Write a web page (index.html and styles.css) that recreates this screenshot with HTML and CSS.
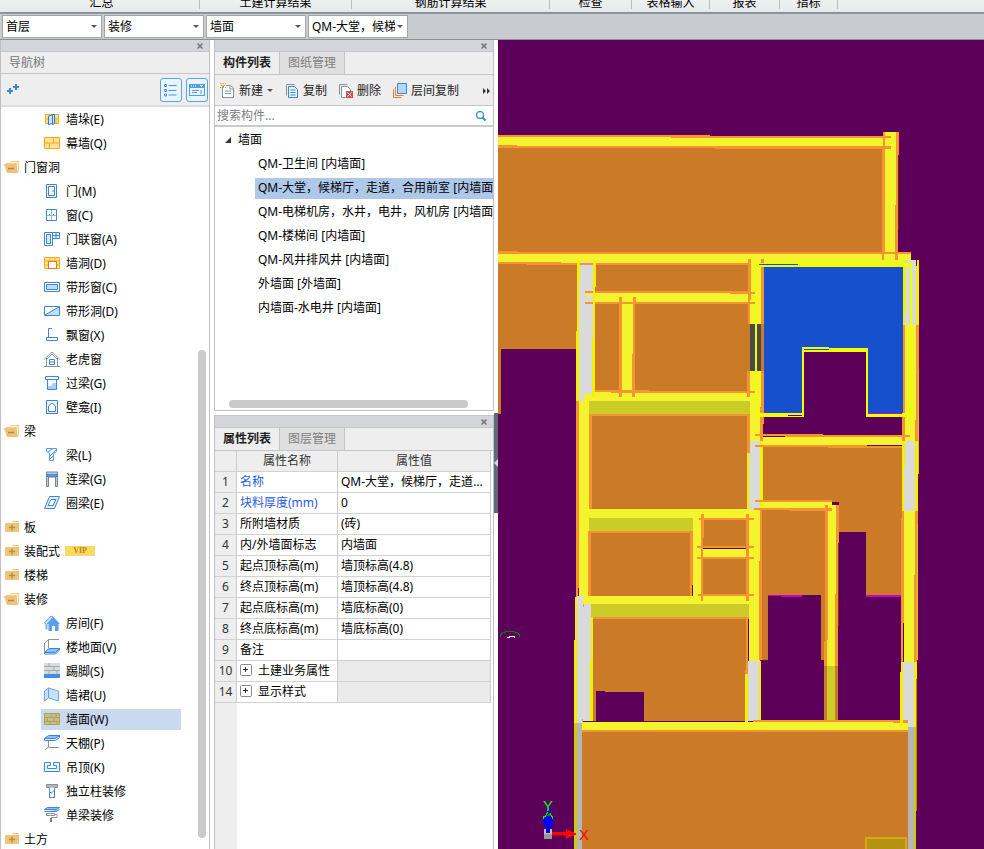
FILE: index.html
```html
<!DOCTYPE html>
<html lang="zh-CN">
<head>
<meta charset="utf-8">
<title>构件列表</title>
<link rel="stylesheet" href="styles.css">
</head>
<body>
<header class="ribbon">
  <span>汇总</span><span>土建计算结果</span><span>钢筋计算结果</span><span>检查</span><span>表格输入</span><span>报表</span><span>指标</span>
</header>
<div class="selectors">
  <select aria-label="楼层"><option>首层</option></select>
  <select aria-label="类别"><option>装修</option></select>
  <select aria-label="构件类型"><option>墙面</option></select>
  <select aria-label="构件"><option>QM-大堂，候梯厅，走道，合用前室</option></select>
</div>
<main class="workspace">
  <nav class="panel nav" aria-label="导航树">
    <div class="caption"><button class="close" aria-label="关闭导航树"><svg viewBox="0 0 6 6"><path d="M.5 .5l5 5M5.500 .5l-5 5"/></svg></button></div>
    <h2 class="nav-title">导航树</h2>
    <div class="nav-tools">
      <button class="plus" aria-label="展开"><svg viewBox="0 0 12 11"><path d="M0 7h6M3 4v6M6 3h6M9 0v6" fill="none" stroke="#3f86d6" stroke-width="2"/></svg></button>
      <button class="view" aria-label="列表视图"><svg viewBox="0 0 14 14"><path d="M4.500 2.500h8M4.500 7.500h8M4.500 12h8" fill="none" stroke="#4794e4"/><path d="M.5 1.500h2v2h-2zM.5 6.500h2v2h-2zM.5 11h2v2h-2z" fill="none" stroke="#4794e4"/></svg></button>
      <button class="view" aria-label="窗口视图"><svg viewBox="0 0 16 14"><path d="M0 1h16v12H0z" fill="#4f9df0"/><path d="M1 5h14v7H1z" fill="#eaf4ff"/><path d="M2 3h1M4 3h1M6 3h1M11 2.500h3M12 3.500h1" stroke="#fff"/><path d="M3 7.500h7M3 9.500h5M12 7v4" stroke="#4f9df0"/></svg></button>
    </div>
    <div class="tree-area">
      <ul class="tree">
        <li class="leaf"><svg viewBox="0 0 16 16"><path d="M1.500 3.500h13v9h-13zM1.500 8h13M5 3.500v4M12 8v4" fill="#ffe28f" stroke="#f5ae1c"/><path d="M4.500 5.500l4-2v9l-4 1zM8.500 3.500h2v9l-2 1z" fill="#cfe4fa" stroke="#2f7dd1"/></svg><a href="#">墙垛(E)</a></li>
        <li class="leaf"><svg viewBox="0 0 16 16"><path d="M.5 2.500h15v11h-15zM.5 8h15M9.500 2.500V8M5.500 8v5.500" fill="#ffe299" stroke="#f8a906"/></svg><a href="#">幕墙(Q)</a></li>
        <li class="group"><svg viewBox="0 0 16 16"><use href="#folder-open"/></svg><a href="#">门窗洞</a></li>
        <li class="leaf"><svg viewBox="0 0 16 16"><path d="M2.500 1.500h10v13h-10z" fill="#e8f3ff" stroke="#3f86d6"/><path d="M4.500 3.500h6v9h-6z" fill="#fff" stroke="#3f86d6"/><path d="M9 7v2" stroke="#3f86d6"/></svg><a href="#">门(M)</a></li>
        <li class="leaf"><svg viewBox="0 0 16 16"><path d="M2.500 2.500h10v11h-10z" fill="#fff" stroke="#3f86d6"/><path d="M7.500 3v10M3 8.500h9" stroke="#8fbbea"/><path d="M5 7.500h1M9 7.500h1" stroke="#3f86d6"/></svg><a href="#">窗(C)</a></li>
        <li class="leaf"><svg viewBox="0 0 16 16"><path d="M.5 1.500h8v13h-8z" fill="#fff" stroke="#3f86d6"/><path d="M2.500 3.500h4v9h-4z" fill="#d3e6fa" stroke="#3f86d6"/><path d="M8.500 1.500h7v6h-7zM12 1.500v6M8.500 4.500h7" fill="#e8f3ff" stroke="#3f86d6"/></svg><a href="#">门联窗(A)</a></li>
        <li class="leaf"><svg viewBox="0 0 16 16"><path d="M.5 2.500h15v11h-15zM.5 6h15M.5 10h15M6 2.500V6M11 2.500V6" fill="#ffe299" stroke="#f8ae16"/><path d="M4.500 6.500h8v7h-8z" fill="#fff" stroke="#ef7421"/></svg><a href="#">墙洞(D)</a></li>
        <li class="leaf"><svg viewBox="0 0 16 16"><path d="M.5 3.500h15v9h-15z" fill="#fff" stroke="#3f86d6"/><path d="M2.500 5.500h11v5h-11z" fill="#bfdcf8" stroke="#3f86d6"/></svg><a href="#">带形窗(C)</a></li>
        <li class="leaf"><svg viewBox="0 0 16 16"><path d="M15.500 3L.5 12.500h15z" fill="#c5dcf5"/><path d="M.5 3.500h15v9h-15zM1 12L15 4" fill="none" stroke="#3f86d6"/></svg><a href="#">带形洞(D)</a></li>
        <li class="leaf"><svg viewBox="0 0 16 16"><path d="M8 1.500H4.500v9M2.500 10.500h11v3h-11z" fill="none" stroke="#3f86d6"/></svg><a href="#">飘窗(X)</a></li>
        <li class="leaf"><svg viewBox="0 0 16 16"><path d="M0 8.500l8-7.500 8 7.500M2.500 7v8M13.500 7v8M0 15.500h16M3 8l5-5 5 5" fill="none" stroke="#8495a0"/><path d="M5.500 8.500h5v5h-5zM5.500 11h5" fill="#fff" stroke="#3f86d6"/></svg><a href="#">老虎窗</a></li>
        <li class="leaf"><svg viewBox="0 0 16 16"><path d="M1.500 1.500h13v3h-13zM3.500 4.500h9v10h-9z" fill="#f2f8ff" stroke="#3f86d6"/><path d="M4 11h3l2-3h3v6H4z" fill="#a9cdf3"/></svg><a href="#">过梁(G)</a></li>
        <li class="leaf"><svg viewBox="0 0 16 16"><path d="M2.500 1.500h11v13h-11z" fill="#e8f3ff" stroke="#3f86d6"/><path d="M4.500 12.500V7l3.500-3 3.500 3v5.500z" fill="#fff" stroke="#3f86d6"/></svg><a href="#">壁龛(I)</a></li>
        <li class="group"><svg viewBox="0 0 16 16"><use href="#folder-open"/></svg><a href="#">梁</a></li>
        <li class="leaf"><svg viewBox="0 0 16 16"><path d="M2.500 1.500h10v3l-3 2v7h-4v-7l-3-2zM4 5l4-3M6 9l6-6M6 12l3-3" fill="#eef6ff" stroke="#589be2"/></svg><a href="#">梁(L)</a></li>
        <li class="leaf"><svg viewBox="0 0 16 16"><path d="M2.500 1v14.500h2V6h7v9.500h2V1z" fill="#c5ced4" stroke="#75858f"/><path d="M3 3.500h10v2H3z" fill="#5ea3ee" stroke="#3f86d6"/></svg><a href="#">连梁(G)</a></li>
        <li class="leaf"><svg viewBox="0 0 16 16"><path d="M5.500 1.500h10l-5 12H.5zM7 4.500h5l-3 6H4z" fill="#e0efff" fill-rule="evenodd" stroke="#3f86d6"/></svg><a href="#">圈梁(E)</a></li>
        <li class="group"><svg viewBox="0 0 16 16"><use href="#folder-closed"/></svg><a href="#">板</a></li>
        <li class="group"><svg viewBox="0 0 16 16"><use href="#folder-closed"/></svg><a href="#">装配式</a><b class="vip">VIP</b></li>
        <li class="group"><svg viewBox="0 0 16 16"><use href="#folder-closed"/></svg><a href="#">楼梯</a></li>
        <li class="group"><svg viewBox="0 0 16 16"><use href="#folder-open"/></svg><a href="#">装修</a></li>
        <li class="leaf"><svg viewBox="0 0 16 16"><path d="M.5 8L7 1l2 1-6 7v5H2V9z" fill="#cfe6fb" stroke="#6aa6e6"/><path d="M3 9l6.500-7L16 9h-1.500v7H11v-5H8v5H4.500V9z" fill="#5a9eee"/></svg><a href="#">房间(F)</a></li>
        <li class="leaf"><svg viewBox="0 0 16 16"><path d="M15 .5H4.500V9M4.500 .5L.5 4v9" fill="none" stroke="#8495a0"/><path d="M5 9.500h10.500l-4 4H.5z" fill="#8cc0f8" stroke="#3f86d6"/><path d="M.5 13.500v1.500h11l4-4V9.500l-4 4z" fill="#e0efff" stroke="#3f86d6"/></svg><a href="#">楼地面(V)</a></li>
        <li class="leaf"><svg viewBox="0 0 16 16"><path d="M0 0h16v11H0z" fill="#d8dbdd"/><path d="M0 3.500h16M0 7.500h16M5 0v3M10 4v3M5 8v3M13 8v3" stroke="#a4aaaf"/><path d="M0 11h16v4H0z" fill="#3f8ee6"/></svg><a href="#">踢脚(S)</a></li>
        <li class="leaf"><svg viewBox="0 0 16 16"><path d="M.5 4l4-3v10l-4 3zM4.500 1l10 3v10l-10-3z" fill="#c8e0fa" stroke="#6aa6e6"/></svg><a href="#">墙裙(U)</a></li>
        <li class="leaf selected"><svg viewBox="0 0 16 16"><path d="M.5 2.500h15v11h-15z" fill="#bfc099" stroke="#b7a243"/><path d="M0 6.500h16M0 10.500h16M7 2v4M12 2v4M3.500 7v4M10 7v4M6 11v3M13 11v3" stroke="#b7a243"/></svg><a href="#" aria-current="true">墙面(W)</a></li>
        <li class="leaf"><svg viewBox="0 0 16 16"><path d="M4.500 6v6L1 15M4.500 12.500H15" fill="none" stroke="#8495a0"/><path d="M4.500 .5h11l-4 3H.5z" fill="#8cc0f8" stroke="#3f86d6"/><path d="M.5 3.500V5.500h11l4-3v-2l-4 3z" fill="#e0efff" stroke="#3f86d6"/></svg><a href="#">天棚(P)</a></li>
        <li class="leaf"><svg viewBox="0 0 16 16"><path d="M.5 3.500h6v3h-3v3h9v-3h-3v-3h6v9H.5z" fill="#eaf4ff" stroke="#3f86d6"/></svg><a href="#">吊顶(K)</a></li>
        <li class="leaf"><svg viewBox="0 0 16 16"><path d="M2.500 1.500h11v3h-11z" fill="#aeb6bb" stroke="#8495a0"/><path d="M5.500 4.500v10h5v-10" fill="#eef6ff" stroke="#8495a0"/><path d="M5.500 14.500V9l2 1 3-3v7.500z" fill="#fff" stroke="#3f86d6"/></svg><a href="#">独立柱装修</a></li>
        <li class="leaf"><svg viewBox="0 0 16 16"><path d="M3.500 .5h12l-3 2H.5zM.5 4.500h12l3-2" fill="#8cc0f8" stroke="#3f86d6"/><path d="M2.500 6.500h8v2h-8zM11 7.500h2v3H7" fill="none" stroke="#8495a0"/><path d="M7 11v4" stroke="#75858f" stroke-width="2"/></svg><a href="#">单梁装修</a></li>
        <li class="group"><svg viewBox="0 0 16 16"><use href="#folder-closed"/></svg><a href="#">土方</a></li>
      </ul>
      <div class="scroll-y"></div>
    </div>
  </nav>

  <div class="middle">
    <section class="panel components">
      <div class="caption"><button class="close" aria-label="关闭构件列表"><svg viewBox="0 0 6 6"><path d="M.5 .5l5 5M5.500 .5l-5 5"/></svg></button></div>
      <div class="tabs"><button class="active">构件列表</button><button>图纸管理</button></div>
      <div class="actions">
        <button><svg viewBox="0 0 16 16"><path d="M4 3.500H2.500v11h11V5l-3-2.500H6M10 3v3h3M5 8h6M5 10.500h6" fill="#fbfcfc" stroke="#8495a0"/><path d="M0 .5h6M0 4.500h6M1 2.500h5" stroke="#f3a21e" stroke-dasharray="1.500 1"/></svg>新建<i class="arrow"></i></button>
        <button><svg viewBox="0 0 16 16"><path d="M2.500 12.500v-11h8" fill="none" stroke="#8495a0"/><path d="M4.500 3.500h6l3 3v8h-9zM6.500 7h5M6.500 9.500h5M6.500 12h5" fill="#e8f3ff" stroke="#3f86d6"/></svg>复制</button>
        <button><svg viewBox="0 0 16 16"><path d="M1.500 11.500v-10h8" fill="none" stroke="#8495a0"/><path d="M3.500 3.500h6l3 3v8h-9z" fill="#fff" stroke="#8495a0"/><path d="M8 8h7v7H8z" fill="#d64c4c"/><path d="M9.500 9.500l4 4M13.500 9.500l-4 4" stroke="#fff"/></svg>删除</button>
        <button><svg viewBox="0 0 16 16"><path d="M1.500 6v8.500h8M3.500 4v8.500h8" fill="none" stroke="#ef7a24"/><path d="M5.500 .5h9v10h-9z" fill="#b5d6fb" stroke="#3f86d6"/></svg>层间复制</button>
        <button class="more" aria-label="更多"><svg viewBox="0 0 8 6"><path d="M0 0l3 3-3 3zM4 0l3 3-3 3z" fill="#333"/></svg></button>
      </div>
      <div class="search"><input type="text" placeholder="搜索构件..." aria-label="搜索构件"><button aria-label="搜索"><svg viewBox="0 0 12 12"><circle cx="5" cy="5" r="3.500" fill="#fff" stroke="#4598c4" stroke-width="1.500"/><path d="M7.500 7.500l3 3" stroke="#2b8fce" stroke-width="2"/></svg></button></div>
      <div class="list-area">
        <h3><svg viewBox="0 0 6 6"><path d="M6 0v6H0z" fill="#333"/></svg>墙面</h3>
        <ul class="list">
          <li><span>QM-卫生间 [内墙面]</span></li>
          <li class="selected"><span>QM-大堂，候梯厅，走道，合用前室 [内墙面]</span></li>
          <li><span>QM-电梯机房，水井，电井，风机房 [内墙面]</span></li>
          <li><span>QM-楼梯间 [内墙面]</span></li>
          <li><span>QM-风井排风井 [内墙面]</span></li>
          <li><span>外墙面 [外墙面]</span></li>
          <li><span>内墙面-水电井 [内墙面]</span></li>
        </ul>
        <div class="scroll-x"></div>
      </div>
    </section>
    <section class="panel properties">
      <div class="caption"><button class="close" aria-label="关闭属性列表"><svg viewBox="0 0 6 6"><path d="M.5 .5l5 5M5.500 .5l-5 5"/></svg></button></div>
      <div class="tabs"><button class="active">属性列表</button><button>图层管理</button></div>
      <table>
        <colgroup><col class="c-num"><col class="c-name"><col></colgroup>
        <thead><tr><th></th><th>属性名称</th><th>属性值</th></tr></thead>
        <tbody>
          <tr class="key"><th>1</th><td>名称</td><td>QM-大堂，候梯厅，走道，合用前室</td></tr>
          <tr class="key"><th>2</th><td>块料厚度(mm)</td><td>0</td></tr>
          <tr><th>3</th><td>所附墙材质</td><td>(砖)</td></tr>
          <tr><th>4</th><td>内/外墙面标志</td><td>内墙面</td></tr>
          <tr><th>5</th><td>起点顶标高(m)</td><td>墙顶标高(4.8)</td></tr>
          <tr><th>6</th><td>终点顶标高(m)</td><td>墙顶标高(4.8)</td></tr>
          <tr><th>7</th><td>起点底标高(m)</td><td>墙底标高(0)</td></tr>
          <tr><th>8</th><td>终点底标高(m)</td><td>墙底标高(0)</td></tr>
          <tr><th>9</th><td>备注</td><td></td></tr>
          <tr class="fold"><th>10</th><td><button aria-label="展开土建业务属性"><svg viewBox="0 0 12 12"><use href="#expand"/></svg></button>土建业务属性</td><td></td></tr>
          <tr class="fold"><th>14</th><td><button aria-label="展开显示样式"><svg viewBox="0 0 12 12"><use href="#expand"/></svg></button>显示样式</td><td></td></tr>
        </tbody>
      </table>
      <div class="rest"></div>
    </section>
  </div>

  <div class="splitter"><button aria-label="折叠面板"><svg viewBox="0 0 4 8"><path d="M4 0v8L0 4z" fill="#d5d8dc"/></svg></button></div>

  <div class="canvas">
    <svg viewBox="498 40 486 809" preserveAspectRatio="xMinYMin slice" shape-rendering="crispEdges" role="img" aria-label="平面图">
      <path fill="#5c005a" d="M498 40h486v809H498z"/>
      <!-- floors -->
      <path fill="#cb7a27" d="M498 147h386v107H498zM498 264h79v85h-79zM498 349h3v65h-3zM595 265h155v27H595zM595 303h155v89H595zM590 415h159v95H590zM590 532h102v65H590zM703 520h45v28h-45zM703 558h45v37h-45zM592 618h156v103H592zM582 731h326v118H582zM762 446h141v150h-37v-64h-27v-30h-77zM762 509h64v151h-5v-65h-53v65h-6z"/>
      <path fill="#5c005a" d="M501 349h53v1h-53zM596 691h9v1h39v29h-48z"/>
      <!-- top wing -->
      <path fill="#f4f42e" d="M498 137h386v10H498zM498 254h413v9H498zM885 132h11v123h-11z"/>
      <path fill="#f59430" d="M498 135h212v1h181v2H671v-1H498zM498 145h19v1h374v3H715v-1H498zM498 251h20v1h393v2H716v1-1H498zM498 262h63v1h194v2H527v-1h-29zM883 132h2v122h-1v6h-2V148h1zM896 132h3v23h-1v105h-3v-55h1z"/>
      <path fill="#5c2c10" d="M898 155h1v75h-1z"/>
      <!-- left rooms -->
      <path fill="#f4f42e" d="M585 293h165v9H585zM622 300h11v92h-11zM584 392h166v9H584zM579 401h10v196h-10zM579 509h171v9H579zM693 518h10v79h-10zM703 549h47v8h-47zM583 596h167v9H583z"/>
      <path fill="#cccc28" d="M589 401h161v13H589zM589 518h104v13H589zM591 604h158v13H591z"/>
      <path fill="#f59430" d="M585 291h170v3H730v-1H585zM585 302h170v2H585zM619 297h3v100h-3zM633 297h3v7h-1v93h-3v-43h1zM584 390h65v1h106v2H611v-1h-27zM576 401h3v187h-1v9h-2zM589 414h161v2H592v93h-3zM588 531h105v54h-1v11h-2V533h-99v63h-3zM701 514h3v24h-1v63h-2zM699 518h56v2h-56zM697 546h58v2h-58zM697 557h58v2h-58zM698 594h57v2h-57zM746 514h3v87h-3zM592 617h157v2H592z"/>
      <path fill="#dadada" d="M579 262h15v135h-10v4h-5zM577 596h6v8h8v117h-8v2h-6z"/>
      <path fill="#f2f200" d="M577 260h3v20h-1v121h-3v-70h1zM593 260h3v27h-1v110h-3v-60h1zM575 597h2v126h-3v-83h1zM591 617h2v104h-3v-60h1z"/>
      <path fill="#f59430" d="M585 291h8v2h-8zM585 302h8v2h-8zM580 263h13v2h-13zM583 604h1v3h-1zM582 719h1v3h-1z"/>
      <path fill="#f4f42e" d="M585 294h8v2h-8zM584 394h8v4h-8z"/>
      <!-- centre wall -->
      <path fill="#f4f42e" d="M750 260h11v181h-11zM749 510h11v151h-11z"/>
      <path fill="#f59430" d="M748 259h3v41h-1v24h-2zM761 259h3v165h-1v23h-3v-40h1zM747 371h3v26h-3zM747 414h3v39h-3zM760 510h2v150h-3v-99h1zM746 617h2v57h-3v-4h1zM740 518h14v2h-14zM740 546h14v2h-14zM740 557h14v2h-14zM740 594h14v2h-14zM746 514h3v87h-3zM740 391h15v2h-15zM740 292h15v2h-15zM740 302h15v2h-15z"/>
      <path fill="#4a4a4a" d="M750 324h11v47h-11z"/>
      <path fill="#cb7a27" d="M761 324h3v47h-3z"/>
      <path fill="#dadada" d="M750 441h10v69h-11v-57h1zM748 661h11v60h-11z"/>
      <path fill="#f2f200" d="M747 453h2v57h-2zM760 441h3v69h-3zM745 674h3v48h-3zM759 661h2v64h-3v-4h1z"/>
      <!-- right-hand rooms -->
      <path fill="#5c005a" d="M764 417h138v18H764z"/>
      <path fill="#f4f42e" d="M763 437h142v8H763zM763 502h69v6h-69zM828 505h8v161h-9v-76h1zM905 325h11v116h-11zM904 511h11v151h-11zM582 722h326v8H582z"/>
      <path fill="#f59430" d="M755 434h68v1h87v2H785v-1h-30zM755 445h112v1h43v2H828v-1h-73zM755 500h77v2h-77zM754 508h78v3h-42v-1h-36zM825 505h3v135h-1v26h-3v-25h1zM836 505h3v38h-1v123h-3v-72h1zM903 325h2v116h-3v-78h1zM916 325h3v45h-1v71h-3v-21h1zM902 511h2v112h-1v39h-2v-144h1zM915 511h3v13h-1v138h-3v-87h1zM753 720h155v3h-15v-1H753zM582 730h326v2H582z"/>
      <path fill="#cccc28" d="M827 666h8v54h-8zM918 370h1v104h-1zM917 524h1v136h-1z"/>
      <path fill="#cb7a27" d="M824 666h3v54h-3zM835 666h3v54h-3z"/>
      <path fill="#6b3a16" d="M838 543h1v83h-1z"/>
      <path fill="#dadada" d="M905 260h11v65h-11zM905 441h10v70h-11v-44h1zM903 662h11v65h-6v-7h-5z"/>
      <path fill="#f2f200" d="M903 260h3v53h-1v12h-2zM916 266h1v-6h2v65h-3zM902 441h3v26h-1v44h-2zM915 441h3v70h-3zM901 662h2v65h-3v-55h1zM914 662h3v17h-1v48h-2z"/>
      <path fill="#b6b6b6" d="M577 723h5v126h-5zM908 727h6v122h-6z"/>
      <path fill="#cccc00" d="M574 723h3v126h-3zM914 727h2v122h-2z"/>
      <path fill="#cb7a27" d="M916 679h1v132h-1z"/>
      <path fill="#c800c8" d="M768 595h34v2h-21v-1h-13zM866 595h35v2h-35z"/>
      <!-- selected wall faces -->
      <path fill="#f0ff00" d="M755 263h157v154h-46v-65h-62v65h-49zM757 267v146h45v-65h66v65h42V267z" fill-rule="evenodd"/>
      <path fill="#1650cc" d="M764 267h139v146h-35v-65h-66v65h-38zM759 264h39v1h-39z"/>
      <path fill="#f0ff00" d="M802 347h27v1h39v69h-2v-65h-62v65h-2z"/>
      <path fill="#1650cc" d="M804 349h25v1h-25z"/>
      <path fill="#5c005a" d="M788 415h14v1h-14z"/>
      <path fill="#c800c8" d="M764 412h3v1h-3zM868 413h34v1h-34z"/>
      <path fill="#d4a818" d="M865 837h42v12h-42z"/><path fill="#b59212" d="M867 839h38v10h-38z"/>
      <!-- origin mark -->
      <path d="M500.500 637v-2l2-2 3-1 3-1h3l3 1 3 1 2 2v2" fill="none" stroke="#087808"/><path d="M507 637.500h2v-1h5v1" fill="none" stroke="#fff"/>
      <!-- axis gizmo -->
      <path fill="#c0c0c0" d="M544 829h8v10h-8z"/><path fill="#999" d="M544 834h8v5h-8z"/>
      <path fill="#f00" d="M552 832h14v-3l11 5-11 5v-3h-14z"/><path fill="#a00000" d="M552 835h14v1h-14z"/>
      <path d="M543.500 820v-3l2-1 2-4h2l2 4 1 1v3" fill="#068206" stroke="#00f030"/>
      <path fill="#00f" d="M546 816h5l2 4v5l-3 3v5h-4v-5l-3-3v-5zM546 808h6v1l-4 6h-1l3-5h-4z"/>
      <text class="axis-y" x="543" y="811">Y</text><text class="axis-x" x="579" y="840">X</text>
    </svg>
  </div>
</main>

<svg class="defs" aria-hidden="true">
  <symbol id="folder-open" viewBox="0 0 16 16"><path d="M3 5V4h4l1-2h8v11h-2z" fill="#f0cf8c"/><path d="M8 3.500h6.500V12" fill="none" stroke="#fff6dc"/><path d="M1 5h12l2 9H4z" fill="#ecc378"/><path d="M5 9.500h6" stroke="#b98632" stroke-width="1.500"/></symbol>
  <symbol id="folder-closed" viewBox="0 0 16 16"><path d="M2 4h7l1-2h5l1 2v9H2z" fill="#ecc67e"/><path d="M9 3.500h6" stroke="#fff3d5"/><path d="M6 8.500h6M9 5.500v6" stroke="#c08c38" stroke-width="1.500"/></symbol>
  <symbol id="expand" viewBox="0 0 12 12"><rect x=".5" y=".5" width="11" height="11" rx="1" fill="#fff" stroke="#8a8a8a"/><path d="M3 5.500h5M5.500 3v5" stroke="#333"/></symbol>
</svg>
</body>
</html>
```
FILE: styles.css
```css
* { box-sizing: border-box; }

body {
  margin: 0;
  height: 100vh;
  display: flex;
  flex-direction: column;
  overflow: hidden;
  background: #fff;
  color: #000;
  font: 12px/20px "Noto Sans", "Noto Sans CJK SC", sans-serif;
}

button, input, select { font: inherit; color: inherit; }
button { margin: 0; padding: 0; border: 0; background: none; }
a { color: inherit; text-decoration: none; }
ul { list-style: none; margin: 0; padding: 0; }
h2, h3 { margin: 0; font: inherit; }
svg { display: block; }
.defs { position: absolute; width: 0; height: 0; }

/* ribbon */
.ribbon {
  flex: none;
  display: grid;
  grid-template-columns: 200px 152px 198px 82px 78px 70px 58px;
  height: 14px;
  overflow: hidden;
  border-bottom: 2px solid #8d9397;
  background: linear-gradient(#edf1f2, #e4eaeb);
}
.ribbon span {
  display: flex;
  align-items: flex-end;
  justify-content: center;
  height: 9px;
  line-height: 12px;
  border-right: 1px solid #b9bec1;
}
.ribbon span:first-child { padding-left: 4px; }

.selectors {
  flex: none;
  display: flex;
  gap: 2px;
  height: 26px;
  padding: 1px 2px;
  border-bottom: 1px solid #8c9194;
  background: #c8ccd0;
}
.selectors select {
  appearance: none;
  width: 100px;
  height: 23px;
  padding: 0 12px 0 3px;
  border: 1px solid #a2a6aa;
  border-radius: 0;
  background: #fff url("data:image/svg+xml,%3Csvg xmlns='http://www.w3.org/2000/svg' width='6' height='3'%3E%3Cpath d='M0 0h6L3 3z' fill='%23555'/%3E%3C/svg%3E") no-repeat right 4px center;
}

.workspace { flex: 1; min-height: 0; display: flex; }
.panel { border: 1px solid #bfc1c6; border-top: 0; }
.caption {
  flex: none;
  display: flex;
  justify-content: flex-end;
  height: 12px;
  padding: 3px 6px 0;
  border-bottom: 1px solid #c4c6cb;
  background: #d4d5da;
}
.close { height: 6px; }
.close svg { width: 6px; height: 6px; fill: none; stroke: #707479; stroke-width: 1.5; }

/* navigation */
.nav {
  flex: none;
  display: flex;
  flex-direction: column;
  width: 210px;
  margin-right: 4px;
  border-bottom: 0;
}
.nav-title {
  height: 22px;
  padding: 0 8px;
  line-height: 21px;
  border-bottom: 1px solid #c4c6cb;
  background: #eee;
  color: #777;
}
.nav-tools {
  display: flex;
  align-items: center;
  gap: 4px;
  height: 33px;
  padding: 0 1px 0 6px;
  border-bottom: 2px solid #dcdcde;
  background: #eee;
}
.plus { margin-right: auto; }
.plus svg { width: 12px; height: 11px; }
.view {
  display: grid;
  place-items: center;
  width: 22px;
  height: 24px;
  border: 1px solid #58a4f2;
  border-radius: 3px;
  background: #e9f4ff;
}
.view svg { width: 16px; height: 14px; }
.tree-area { flex: 1; min-height: 0; display: flex; overflow: hidden; }
.tree { flex: 1; }
.tree li {
  display: flex;
  align-items: center;
  height: 24px;
  line-height: 21px;
}
.tree svg { flex: none; width: 16px; height: 16px; }
.group { gap: 5px; padding-left: 2px; }
.leaf { gap: 6px; padding-left: 3px; margin: 0 17px 0 40px; }
.leaf.selected {
  background: linear-gradient(#c9d9f0, #c9d9f0) center / 100% 21px no-repeat;
}
.vip {
  width: 30px;
  height: 10px;
  background: #ffd966;
  color: #b58916;
  font: bold 8px/10px "Liberation Serif", serif;
  text-align: center;
}
.scroll-y {
  flex: none;
  width: 8px;
  margin: 243px 3px 11px 0;
  border-radius: 4px;
  background: #cacaca;
}

/* component list */
.middle {
  flex: none;
  display: flex;
  flex-direction: column;
  gap: 4px;
  width: 280px;
}
.components { flex: none; }
.tabs {
  display: flex;
  height: 23px;
  border-bottom: 1px solid #c4c6cb;
  background: #eee;
}
.tabs button {
  width: 65px;
  line-height: 22px;
  border-right: 1px solid #c4c6cb;
  background: #dfdfdf;
  color: #808080;
}
.tabs .active { background: #eee; color: #222; font-weight: bold; }
.actions {
  display: flex;
  align-items: center;
  gap: 11px;
  height: 31px;
  padding: 1px 2px 0 5px;
  border-bottom: 1px solid #c4c6cb;
  background: #eee;
  color: #222;
}
.actions button { display: flex; align-items: center; gap: 3px; white-space: nowrap; }
.actions svg { width: 16px; height: 16px; }
.actions .more { margin-left: auto; }
.actions .more svg { width: 8px; height: 6px; }
.arrow {
  margin-left: 1px;
  border: 3px solid transparent;
  border-top-color: #555;
  border-bottom: 0;
}
.search {
  display: flex;
  align-items: center;
  height: 21px;
  padding-right: 6px;
  border-bottom: 2px solid #c8cacc;
}
.search input { flex: 1; min-width: 0; height: 18px; padding: 0 2px; border: 0; outline: 0; }
.search input::placeholder { color: #808080; opacity: 1; }
.search svg { width: 12px; height: 12px; }
.list-area { padding: 1px 0 2px; overflow: hidden; }
.list-area h3 {
  display: flex;
  align-items: center;
  gap: 7px;
  height: 24px;
  padding-left: 10px;
}
.list-area h3 svg { width: 6px; height: 6px; }
.list li {
  display: flex;
  align-items: center;
  height: 24px;
  margin-left: 40px;
  padding-left: 3px;
  white-space: nowrap;
  overflow: hidden;
}
.list .selected { background: linear-gradient(#aec8ea, #aec8ea) center / 100% 21px no-repeat; }
.scroll-x { height: 8px; margin: 80px 25px 0 14px; border-radius: 4px; background: #cacaca; }

/* properties */
.properties {
  flex: 1;
  min-height: 0;
  display: flex;
  flex-direction: column;
  border-top: 1px solid #c4c6cb;
  border-bottom: 0;
}
.properties table {
  width: 276px;
  table-layout: fixed;
  border-collapse: separate;
  border-spacing: 0;
}
.c-num { width: 22px; }
.c-name { width: 101px; }
.properties th, .properties td {
  height: 21px;
  padding: 0 3px;
  line-height: 20px;
  border-right: 1px solid #c9cbd0;
  border-bottom: 1px solid #d2d2d4;
  font-weight: normal;
  text-align: left;
  white-space: nowrap;
  overflow: hidden;
  text-overflow: ellipsis;
}
.properties th { padding: 0; background: #eee; color: #333; text-align: center; }
.key td:nth-child(2) { color: #1f5be8; }
.fold td:last-child { background: #eaeaea; }
.fold button { float: left; padding: 3px 6px 0 0; }
.fold svg { width: 12px; height: 12px; }
.rest { flex: 1; width: 22px; background: #eee; }

/* drawing */
.splitter { flex: none; display: flex; align-items: flex-start; width: 4px; }
.splitter button {
  display: grid;
  place-items: center;
  width: 4px;
  height: 100px;
  margin-top: 373px;
  background: #606a75;
}
.splitter svg { width: 4px; height: 8px; }
.canvas { flex: 1; min-width: 0; background: #5c005a; }
.canvas svg { width: 100%; height: 100%; }
.axis-x, .axis-y { font: 15px "Liberation Sans", sans-serif; }
.axis-x { fill: #f00; }
.axis-y { fill: #0f0; }
```
